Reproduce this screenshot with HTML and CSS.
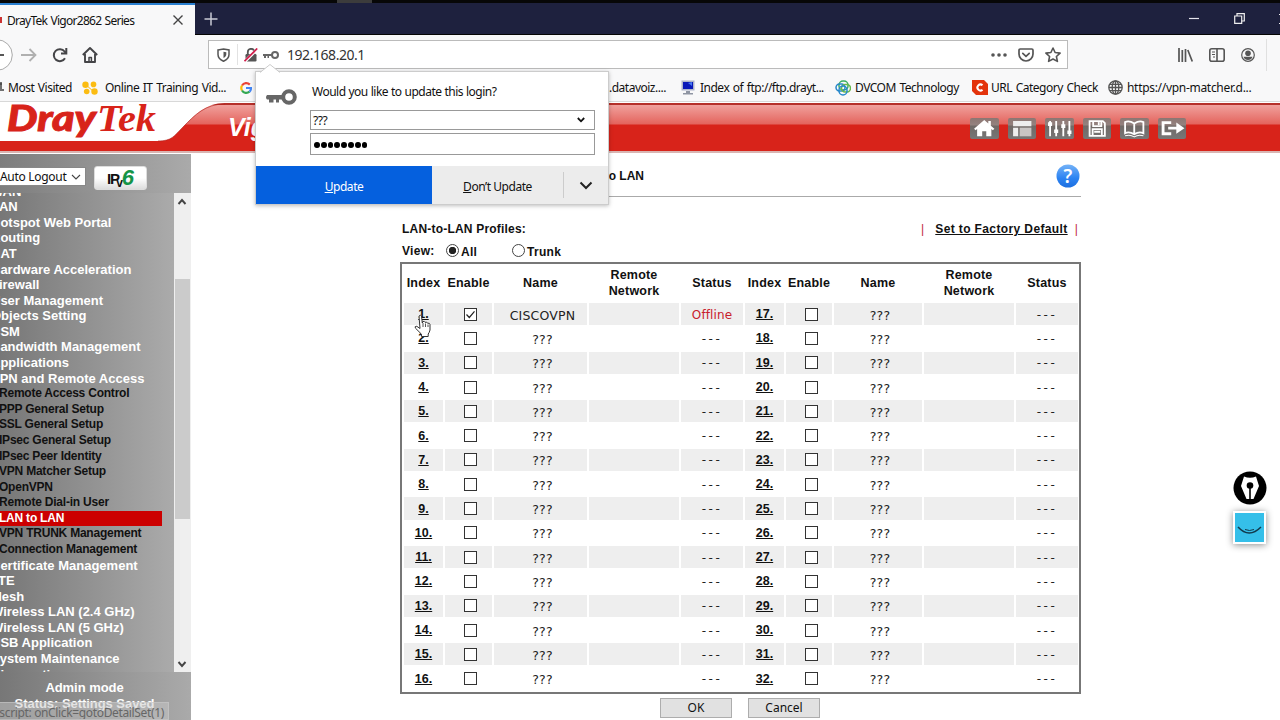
FILE: index.html
```html
<!DOCTYPE html>
<html lang="en">
<head>
<meta charset="UTF-8">
<meta name="viewport" content="width=device-width, initial-scale=1.0">
<title>DrayTek Vigor2862 Series</title>
<link rel="stylesheet" href="styles.css">
</head>
<body>
<div class="screen-edge"><span></span></div>
<div class="tabbar">
    <div class="tab">
        <i class="favicon"></i>
        <span class="tab-title">DrayTek Vigor2862 Series</span>
        <svg width="12" height="12" viewBox="0 0 12 12"><path d="M1.5 1.5l9 9M10.5 1.5l-9 9" stroke="#444" stroke-width="1.4"/></svg>
    </div>
    <svg class="new-tab" width="14" height="14" viewBox="0 0 14 14"><path d="M7 .5v13M.5 7h13" stroke="#c9cad5" stroke-width="1.5"/></svg>
    <div class="window-buttons">
        <svg width="10" height="12" viewBox="0 0 10 12"><path d="M0 5.5h10" stroke="#e4e4ec" stroke-width="1.2"/></svg>
        <svg width="11" height="11" viewBox="0 0 11 11" fill="none" stroke="#eee" stroke-width="1.2"><path d="M.7 3h7v7.3h-7zM3 3V.7h7.300V8H8"/></svg>
        <svg width="10" height="10" viewBox="0 0 10 10"><path d="M0 0l10 10M10 0L0 10" stroke="#eee"/></svg>
    </div>
</div>
<div class="toolbar">
    <div class="nav-icons">
        <svg width="14" height="32" viewBox="0 0 14 32" fill="none"><circle cx="-3" cy="16" r="15.3" fill="#fff" stroke="#aaa"/><path d="M-6 16H4" stroke="#444" stroke-width="1.8"/></svg>
        <svg class="forward" width="16" height="14" viewBox="0 0 16 14" fill="none" stroke="#b0b0b0" stroke-width="1.8"><path d="M0 7h14M8.500 1l6 6-6 6"/></svg>
        <svg class="reload" width="16" height="16" viewBox="0 0 16 16" fill="none" stroke="#454548" stroke-width="2"><path d="M13 11.200A6 6 0 1 1 12.600 4.500L14 6"/><path d="M14.300 1v5.600H9"/></svg>
        <svg class="home" width="16" height="16" viewBox="0 0 16 16" fill="none" stroke="#454548" stroke-width="1.9" stroke-linejoin="round"><path d="M.8 8L8 1l7.200 7M3 7v8h10V7"/><path d="M7 15v-4.500h2.400V15" stroke-width="1.5"/></svg>
    </div>
    <div class="urlbar">
        <svg width="13" height="14" viewBox="0 0 13 14" fill="none" stroke="#555" stroke-width="1.5"><path d="M1 2l5.500-1L12 2v4.500c0 3-2 5.200-5.500 6.700C3 11.700 1 9.500 1 6.500z"/><path d="M6.500 3.800v6.300c2-1.100 2.800-2.300 2.800-4.100V4.300z" fill="#555" stroke="none"/></svg>
        <i class="url-sep"></i>
        <svg class="lock" width="14" height="14" viewBox="0 0 14 14"><path d="M3.800 6V4a3.200 3.200 0 0 1 6.400 0v2" fill="none" stroke="#555" stroke-width="1.8"/><rect x="1.5" y="6" width="11" height="7.5" rx="1.2" fill="#555"/><path d="M0 14.500L13.500.8" stroke="#fff" stroke-width="3"/><path d="M.5 13.200L13.200.5" stroke="#d01c4a" stroke-width="1.7"/></svg>
        <svg class="small-key" width="16" height="8" viewBox="0 0 32 16"><path d="M0 6h18v4H12v4H9v-4H6v4H2v-4H0z" fill="#666"/><circle cx="24" cy="8" r="6" fill="none" stroke="#666" stroke-width="4"/></svg>
        <span class="address">192.168.20.1</span>
        <span class="url-actions">
            <svg width="16" height="16" viewBox="0 0 16 16" fill="#555"><circle cx="2" cy="8" r="1.8"/><circle cx="8" cy="8" r="1.8"/><circle cx="14" cy="8" r="1.8"/></svg>
            <svg width="16" height="14" viewBox="0 0 16 14" fill="none" stroke="#555" stroke-width="1.7" stroke-linecap="round"><path d="M2.200 1h11.600q1.200 0 1.200 1.200V6a7 7 0 0 1-14 0V2.200Q1 1 2.200 1z"/><path d="M4.800 5.300L8 8.300l3.200-3"/></svg>
            <svg width="16" height="16" viewBox="0 0 16 16" fill="none" stroke="#555" stroke-width="1.6" stroke-linejoin="round"><path d="M8 1l2.100 4.500 5 .6-3.700 3.400 1 4.900L8 12l-4.400 2.400 1-4.900L.9 6.100l5-.6z"/></svg>
        </span>
    </div>
    <div class="toolbar-right">
        <svg width="15" height="14" viewBox="0 0 15 14" stroke="#555" stroke-width="1.7"><path d="M1 0v14M4.300 2v12M7.500 1v13M9.800 2l4.500 11.500"/></svg>
        <svg width="16" height="14" viewBox="0 0 16 14" fill="none" stroke="#555" stroke-width="1.6"><rect x=".8" y=".8" width="14.4" height="12.4" rx="2"/><path d="M8 1v12"/><path d="M3 4h3M3 6.500h3M4 9h2" stroke-width="1"/></svg>
        <svg width="14" height="14" viewBox="0 0 14 14"><circle cx="7" cy="7" r="6.3" fill="none" stroke="#555" stroke-width="1.2"/><circle cx="7" cy="5.2" r="2.8" fill="#555"/><path d="M2.500 8.700h9A5 5 0 0 1 7 12a5 5 0 0 1-4.500-3.300z" fill="#555"/></svg>
        <i class="toolbar-sep"></i>
    </div>
</div>
<div class="bookmarks">
    <span class="bm most"><svg width="6" height="14" viewBox="0 0 6 14" stroke="#444" stroke-width="1.5" fill="none"><path d="M0 3h2M1 1v7M0 9h4"/></svg><b>Most Visited</b></span>
    <span class="bm online"><svg width="16" height="14" viewBox="0 0 16 14" fill="#fbbc12"><circle cx="3.5" cy="3.8" r="3.2"/><circle cx="11.5" cy="3.4" r="2.8"/><circle cx="4.7" cy="10.5" r="2.8"/><circle cx="12.5" cy="10.5" r="3.2"/><path d="M3 3l9 8" stroke="#fbbc12"/></svg><b>Online IT Training Vid...</b></span>
    <span class="bm"><svg width="12" height="12" viewBox="0 0 12 12" fill="none" stroke-width="2.2"><path d="M9.800 2.600A5 5 0 0 0 2 3.500" stroke="#ea4335"/><path d="M2 3.500a5 5 0 0 0 0 5" stroke="#fbbc05"/><path d="M2 8.500a5 5 0 0 0 7.500 1.200" stroke="#34a853"/><path d="M9.500 9.700A5 5 0 0 0 11 6H6" stroke="#4285f4"/></svg></span>
    <span class="bm dv"><b>.datavoiz....</b></span>
    <span class="bm ftp"><svg width="14" height="15" viewBox="0 0 14 15"><rect x=".5" y=".5" width="13" height="10" fill="#adb4c9"/><rect x="2" y="2" width="10" height="7" fill="#0818b9"/><path d="M7 3l4-1v4z" fill="#4778ef"/><path d="M5 11h4v2h3v1.500H2V13h3z" fill="#8f95a3"/></svg><b>Index of ftp://ftp.drayt...</b></span>
    <span class="bm dvcom"><svg width="16" height="16" viewBox="0 0 16 16" fill="none" stroke-width="1.5"><rect x="4" y="1" width="9" height="9" rx="4" stroke="#39ad63"/><rect x="1" y="4" width="9" height="7" rx="3.5" stroke="#2786c8"/><rect x="6.500" y="4.500" width="9" height="7.500" rx="3.700" stroke="#67b74d"/><rect x="4" y="6" width="8" height="9" rx="4" stroke="#2588cc"/></svg><b>DVCOM Technology</b></span>
    <span class="bm cat"><svg width="16" height="15" viewBox="0 0 16 15"><path d="M0 0h12l4 4v11H4l-4-4z" fill="#e3330c"/><path d="M10.500 5.300A3 3 0 1 0 10.500 9.700" fill="none" stroke="#fff" stroke-width="2"/></svg><b>URL Category Check</b></span>
    <span class="bm vpn"><svg width="15" height="15" viewBox="0 0 15 15" fill="none" stroke="#555" stroke-width="1.3"><circle cx="7.5" cy="7.5" r="6.7"/><ellipse cx="7.5" cy="7.5" rx="3.3" ry="6.7"/><path d="M7.500 1v13M1 7.500h13M2 4.300h11M2 10.700h11"/></svg><b>https://vpn-matcher.d...</b></span>
</div>
<div class="banner">
    <svg class="logo" width="270" height="50" viewBox="0 0 270 50">
        <path d="M0 0H225C205 0 195 12 183 24C174 33 172 38 158 38H0z" fill="#fff"/>
        <path d="M158 38C172 38 174 33 183 24C195 12 205 1 225 1" fill="none" stroke="#b0201a" stroke-width="1" opacity=".6"/>
        <text class="logo-dray" x="7" y="28" textLength="89" lengthAdjust="spacingAndGlyphs">Dray</text>
        <text class="logo-tek" x="97" y="28" textLength="59" lengthAdjust="spacingAndGlyphs">Tek</text>
        <text class="logo-vigor" x="228" y="33">Vigor</text>
    </svg>
    <div class="shortcuts">
        <i><svg viewBox="0 0 28 20"><path d="M14 2L4 10.500l1.500 1.500L7 10.800V18h5v-5h4v5h5v-7.200l1.500 1.200 1.500-1.500-3.500-3V3h-2.500v2.300z" fill="#fff"/></svg></i>
        <i><svg viewBox="0 0 28 20"><path d="M5 3h18v5H5zM5 9.500h5V18H5z" fill="#eee"/><path d="M11.500 9.500H23V18H11.500z" fill="#c9c5c4"/></svg></i>
        <i><svg viewBox="0 0 28 20" stroke="#fff" stroke-width="1.8"><path d="M5 3v15M11 3v15M18 3v15M24 3v15"/><path d="M3 6h4M9 13h4M16 8h4M22 14h4" stroke-width="3.500"/></svg></i>
        <i><svg viewBox="0 0 28 20" fill="none" stroke="#fff" stroke-width="1.8"><path d="M6.500 3h13l2 2v12.500h-15z"/><path d="M10 3v5h8V3M9.500 17v-6h9v6M11 13.500h6"/><path d="M15.500 4v3"/></svg></i>
        <i><svg viewBox="0 0 28 20" fill="none" stroke="#fff" stroke-width="1.8"><path d="M14 5.500Q9 2 5 4v11q4-2 9 1 5-3 9-1V4q-4-2-9 1.500zM14 5v11"/><path d="M5 17.500q5-1.500 9 1 4-2.500 9-1" stroke-width="1"/></svg></i>
        <i><svg viewBox="0 0 28 20"><path d="M13 4.500H5v11h8M10 10h10" fill="none" stroke="#fff" stroke-width="2.800"/><path d="M18 4.500L26 10l-8 5.500z" fill="#fff"/></svg></i>
    </div>
</div>
<div class="page">
    <div class="sidebar">
        <div class="sidebar-top">
            <div class="logout"><span>Auto Logout</span><svg width="10" height="6" viewBox="0 0 10 6"><path d="M1 1l4 4 4-4" fill="none" stroke="#444" stroke-width="1.1"/></svg></div>
            <div class="ipv6"><b>IP</b><small>v</small><em>6</em></div>
        </div>
        <div class="menu-wrap">
            <ul class="menu">
                <li>WAN</li>
                <li>LAN</li>
                <li>Hotspot Web Portal</li>
                <li>Routing</li>
                <li>NAT</li>
                <li>Hardware Acceleration</li>
                <li>Firewall</li>
                <li>User Management</li>
                <li>Objects Setting</li>
                <li>CSM</li>
                <li>Bandwidth Management</li>
                <li>Applications</li>
                <li>VPN and Remote Access</li>
                <li class="sub">Remote Access Control</li>
                <li class="sub">PPP General Setup</li>
                <li class="sub">SSL General Setup</li>
                <li class="sub">IPsec General Setup</li>
                <li class="sub">IPsec Peer Identity</li>
                <li class="sub">VPN Matcher Setup</li>
                <li class="sub">OpenVPN</li>
                <li class="sub">Remote Dial-in User</li>
                <li class="sub active">LAN to LAN</li>
                <li class="sub">VPN TRUNK Management</li>
                <li class="sub">Connection Management</li>
                <li>Certificate Management</li>
                <li>LTE</li>
                <li>Mesh</li>
                <li>Wireless LAN (2.4 GHz)</li>
                <li>Wireless LAN (5 GHz)</li>
                <li>USB Application</li>
                <li>System Maintenance</li>
                <li>Diagnostics</li>
            </ul>
            <div class="scrollbar">
                <svg width="16" height="17" viewBox="0 0 16 17"><path d="M4.500 11L8 7l3.500 4" fill="none" stroke="#444" stroke-width="1.9"/></svg>
                <i></i>
                <svg width="16" height="17" viewBox="0 0 16 17"><path d="M4.500 7L8 11l3.500-4" fill="none" stroke="#444" stroke-width="1.9"/></svg>
            </div>
        </div>
        <div class="mode">Admin mode<br>Status: Settings Saved</div>
    </div>
    <div class="content">
        <div class="title-row">
            <span class="page-title">VPN and Remote Access &gt;&gt; LAN to LAN</span>
            <svg width="24" height="24" viewBox="0 0 24 24">
                <defs><linearGradient id="help" x1="0" y1="0" x2="0" y2="1"><stop offset="0" stop-color="#74b2f7"/><stop offset=".6" stop-color="#2c83f2"/><stop offset="1" stop-color="#1d6fe0"/></linearGradient></defs>
                <circle cx="12" cy="12" r="11.5" fill="url(#help)"/>
                <text class="help-mark" x="12" y="19" text-anchor="middle">?</text>
            </svg>
        </div>
        <div class="profiles-row">
            <span>LAN-to-LAN Profiles:</span>
            <span class="factory"><i>|</i><u>Set to Factory Default</u><i>|</i></span>
        </div>
        <div class="view-row">
            <span class="view-label">View:</span>
            <i class="radio on"></i><span class="all">All</span>
            <i class="radio"></i><span class="trunk">Trunk</span>
        </div>
        <div class="profiles" id="profiles">
            <div class="th">Index</div><div class="th">Enable</div><div class="th">Name</div><div class="th">Remote<br>Network</div><div class="th">Status</div>
            <div class="th">Index</div><div class="th">Enable</div><div class="th">Name</div><div class="th">Remote<br>Network</div><div class="th">Status</div>
        </div>
        <div class="buttons"><span>OK</span><span>Cancel</span></div>
    </div>
</div>

<div class="login-popup">
    <svg class="popup-arrow" width="20" height="9" viewBox="0 0 20 9"><path d="M0 9L10 0l10 9z" fill="#fff"/><path d="M0 8.500L10 .5l10 8" fill="none" stroke="#ccc"/></svg>
    <div class="popup-body">
        <svg width="32" height="16" viewBox="0 0 32 16"><path d="M2 6h17v4.500h-5v3h-3v-3H8.500v3H4v-3H2q-2-2.200 0-4.500z" fill="#666"/><circle cx="24" cy="8" r="5.8" fill="none" stroke="#666" stroke-width="4"/></svg>
        <div class="popup-form">
            <p>Would you like to update this login?</p>
            <div class="field user"><span>???</span><svg width="8" height="6" viewBox="0 0 8 6"><path d="M.8 1L4 4.300 7.200 1" fill="none" stroke="#111" stroke-width="1.8"/></svg></div>
            <div class="field pass"><i></i><i></i><i></i><i></i><i></i><i></i><i></i><i></i></div>
        </div>
    </div>
    <div class="popup-buttons">
        <span class="update"><span><u>U</u>pdate</span></span>
        <span class="dont"><span><u>D</u>on’t Update</span></span>
        <span class="more"><svg width="14" height="9" viewBox="0 0 14 9"><path d="M1.500 1.500L7 7l5.500-5.500" fill="none" stroke="#222" stroke-width="2"/></svg></span>
    </div>
</div>
<svg class="cursor" width="18" height="24" viewBox="0 0 18 24"><path d="M5 2q1.500-1.500 2.500 0l.8 7 .5-1.500q1.800-.6 2.200.8 2-.8 2.500.9 2.200-.5 2.500 1.300v5.500q-.6 2.500-1.800 4V22.500H7.500v-2.300L1.300 14q-.8-2 1.500-1.700L6 14.500z" fill="#fff" stroke="#333"/><path d="M9 9v4M11.500 9.500V13M14 10.500V13" stroke="#555" fill="none"/></svg>
<div class="dock">
    <svg width="34" height="34" viewBox="0 0 34 34"><circle cx="17" cy="17" r="16.5" fill="#000"/><path d="M11 5.500q6 2.500 12 0L26 15l-5.500 13h-7L8 15z" fill="#fff"/><path d="M17 15v13" stroke="#000" stroke-width="1.6"/><circle cx="17" cy="14.500" r="3.300" fill="#000"/></svg>
    <svg class="smile" width="33" height="33" viewBox="0 0 33 33"><rect x="1" y="1" width="31" height="31" fill="#35bfe9" stroke="#fff" stroke-width="2"/><path d="M5 16q11 12 23 0" fill="none" stroke="#123a4c" stroke-width="1.500"/><path d="M12 18.500q4.500 2 9 0" fill="none" stroke="#123a4c"/></svg>
</div>
<div class="status-tip"><span>ascript: onClick=gotoDetailSet(1)</span></div>

<script>
const grid = document.getElementById('profiles');

function cells(index, odd) {
    const first = index === 1;
    const shade = odd ? ' odd' : '';
    const check = first ? '<svg viewBox="0 0 11 11"><path d="M1.500 5.500l2.800 3 5.200-6.200" fill="none" stroke="#222" stroke-width="1.200"/></svg>' : '';
    return `
        <div class="td index${shade}"><u>${index}.</u></div>
        <div class="td enable${shade}"><i class="checkbox">${check}</i></div>
        <div class="td name${shade}">${first ? 'CISCOVPN' : '???'}</div>
        <div class="td${shade}"></div>
        <div class="td status${shade}${first ? ' offline' : ''}">${first ? 'Offline' : '---'}</div>
    `;
}

let rows = '';
for (let i = 1; i <= 16; i++) {
    rows += cells(i, i % 2) + cells(i + 16, i % 2);
}
grid.insertAdjacentHTML('beforeend', rows);
</script>
</body>
</html>
```
FILE: styles.css
```css
* {
    box-sizing: border-box;
}
body {
    margin: 0;
    width: 1280px;
    height: 720px;
    display: flex;
    flex-direction: column;
    overflow: hidden;
    position: relative;
    background: #fff;
    color: #111;
    font-family: "Liberation Sans", Arial, sans-serif;
}
svg {
    display: block;
    flex-shrink: 0;
}
/* Browser chrome */
.screen-edge {
    height: 3px;
    background: #070707;
    flex-shrink: 0;
}
.screen-edge span {
    display: block;
    width: 35px;
    height: 3px;
    margin-left: 337px;
    background: #3c3c3c;
}
.tabbar {
    display: flex;
    align-items: center;
    height: 32px;
    flex-shrink: 0;
    background: #1e213e;
    border-bottom: 1px solid #050505;
}
.tab {
    display: flex;
    align-items: center;
    width: 195px;
    height: 32px;
    margin-bottom: -1px;
    background: #f8f8f9;
    border-top: 2px solid #2a7fd0;
    font: 12px "Noto Sans", sans-serif;
}
.favicon {
    width: 2px;
    height: 6px;
    background: #c33;
    margin-right: 5px;
}
.tab-title {
    width: 165px;
    white-space: nowrap;
    letter-spacing: -0.72px;
    word-spacing: 0.8px;
}
.new-tab {
    margin-left: 9px;
}
.window-buttons {
    display: flex;
    align-items: center;
    gap: 34.5px;
    margin-left: auto;
    margin-right: -9px;
}
.toolbar {
    display: flex;
    align-items: center;
    height: 39px;
    flex-shrink: 0;
    background: #f8f8f9;
}
.nav-icons {
    display: flex;
    align-items: center;
    width: 208px;
}
.forward {
    margin-left: 7px;
}
.reload {
    margin-left: 15px;
}
.home {
    margin-left: 14px;
}
.urlbar {
    display: flex;
    align-items: center;
    width: 860px;
    height: 29px;
    padding: 0 6px 0 8px;
    border: 1px solid #bbb;
    background: #fff;
}
.url-sep {
    width: 1px;
    height: 21px;
    margin: 0 6px 0 7px;
    background: #e2e2e2;
}
.small-key {
    margin-left: 5px;
}
.address {
    margin-left: 8px;
    font: 14px "Noto Sans", sans-serif;
    letter-spacing: -0.45px;
    color: #333;
}
.url-actions {
    display: flex;
    align-items: center;
    gap: 11px;
    margin-left: auto;
}
.toolbar-right {
    display: flex;
    align-items: center;
    gap: 16px;
    margin-left: 110px;
}
.toolbar-sep {
    width: 1px;
    height: 32px;
    background: #e0e0e0;
    margin-left: -5px;
}
.bookmarks {
    display: flex;
    align-items: center;
    height: 28px;
    flex-shrink: 0;
    background: #f8f8f9;
    border-bottom: 1px solid #d8d8d8;
    font: 12px "Noto Sans", sans-serif;
}
.bm {
    display: flex;
    align-items: center;
    white-space: nowrap;
}
.bm b {
    font-weight: normal;
    letter-spacing: -0.5px;
    word-spacing: 1px;
}
.most {
    width: 82px;
    gap: 2px;
}
.online {
    width: 158px;
    gap: 7px;
}
.dv {
    width: 72px;
    margin-left: 357px;
}
.ftp {
    width: 154px;
    gap: 5px;
}
.dvcom {
    width: 137px;
    gap: 4px;
}
.cat {
    width: 136px;
    gap: 3px;
}
.vpn {
    gap: 4px;
}
.bm.vpn b {
    letter-spacing: -0.3px;
}
/* Router header */
.banner {
    display: flex;
    align-items: flex-start;
    height: 50px;
    flex-shrink: 0;
    border-top: 2px solid #b5302a;
    border-bottom: 2px solid #d9b5b2;
    background: linear-gradient(#f0a19d 0, #e4645d 19px, #d8231a 20px);
    margin-top: 1px;
}
.logo {
    margin-top: -2px;
}
.logo-dray {
    font: italic 900 36px Lato, sans-serif;
    fill: #d8231a;
    stroke: #d8231a;
    stroke-width: 0.9px;
}
.logo-tek {
    font: italic bold 37px "Liberation Serif", serif;
    fill: #d8231a;
}
.logo-vigor {
    font: italic bold 25px "Liberation Sans", sans-serif;
    fill: #fff;
}
.shortcuts {
    display: flex;
    gap: 9px;
    margin: 13px 0 0 700px;
}
.shortcuts i {
    width: 28.5px;
    height: 21px;
    border-radius: 2px;
    background: linear-gradient(#8d7672 0, #94827f 7px, #706966 8px, #777);
}
.page {
    display: flex;
    flex: 1;
    min-height: 0;
}
/* Sidebar */
.sidebar {
    display: flex;
    flex-direction: column;
    width: 191px;
    margin-top: 1px;
    background: linear-gradient(90deg, #777, #999 60%, #b0b0b0);
    overflow: hidden;
}
.sidebar-top {
    display: flex;
    height: 39px;
    flex-shrink: 0;
    background: linear-gradient(90deg, #7d7d7d, #aaa);
}
.logout {
    display: flex;
    align-items: center;
    justify-content: space-between;
    width: 86px;
    height: 19px;
    margin-top: 13px;
    padding-right: 4px;
    border: 1px solid #888;
    border-left: 0;
    background: #fff;
    font: 12px "Noto Sans", sans-serif;
    white-space: nowrap;
    letter-spacing: -0.3px;
}
.ipv6 {
    display: flex;
    align-items: center;
    justify-content: center;
    width: 53px;
    height: 24px;
    margin: 12px 0 0 8px;
    border: 1px solid #ddd;
    border-radius: 3px;
    background: linear-gradient(#fff 50%, #ddd);
    font-size: 15px;
}
.ipv6 b {
    letter-spacing: -1px;
}
.ipv6 small {
    margin: 9px -1px 0 -3px;
    font-size: 12px;
    font-weight: bold;
}
.ipv6 em {
    color: #149447;
    font: italic bold 22px "Liberation Sans", sans-serif;
}
.menu-wrap {
    display: flex;
    height: 479px;
    flex-shrink: 0;
    overflow: hidden;
}
.menu {
    list-style: none;
    width: 174px;
    margin: -9.3px 0 0;
    padding: 0;
    flex-shrink: 0;
}
.menu li {
    height: 15.58px;
    text-indent: -9px;
    line-height: 15.58px;
    color: #fff;
    font-size: 13px;
    font-weight: bold;
    white-space: nowrap;
    letter-spacing: 0;
}
.menu .sub {
    width: 162px;
    text-indent: -1px;
    color: #111;
    font-size: 12px;
    letter-spacing: -0.22px;
}
.menu .active {
    background: #c00;
    color: #fff;
}
.scrollbar {
    display: flex;
    flex-direction: column;
    justify-content: space-between;
    width: 17px;
    background: #efefef;
}
.scrollbar i {
    height: 240px;
    margin: 69px 1px auto;
    background: #cbcbcb;
}
.mode {
    flex: 1;
    padding: 8px 22px 0 0;
    background: linear-gradient(90deg, #777, #aaa);
    color: #fff;
    text-align: center;
    font-size: 13px;
    font-weight: bold;
    line-height: 16px;
    letter-spacing: -0.05px;
}
/* Main area */
.content {
    width: 681px;
    margin-left: 209px;
}
.title-row {
    display: flex;
    align-items: center;
    justify-content: space-between;
    height: 44px;
    padding: 2px 1px 0 0;
    border-bottom: 1px solid #aaa;
    font-size: 12px;
    font-weight: bold;
}
.page-title {
    width: 244px;
    text-align: right;
    white-space: nowrap;
}
.help-mark {
    font: 600 19px "Noto Sans", sans-serif;
    fill: #fff;
}
.profiles-row {
    display: flex;
    align-items: center;
    justify-content: space-between;
    height: 20px;
    margin-top: 22px;
    padding: 0 3px 0 2px;
    font-size: 12px;
    font-weight: bold;
    letter-spacing: 0.2px;
}
.factory i {
    color: #c22840;
    font-style: normal;
    font-weight: normal;
}
.factory u {
    margin: 0 7px 0 11px;
    letter-spacing: 0.38px;
}
.view-row {
    display: flex;
    align-items: center;
    height: 23px;
    padding-left: 2px;
    font-size: 12px;
    font-weight: bold;
    letter-spacing: 0.3px;
}
.view-label {
    width: 44px;
    white-space: nowrap;
}
.radio {
    width: 13px;
    height: 13px;
    margin-right: 2px;
    border: 1px solid #444;
    border-radius: 50%;
    background: #fff;
}
.radio.on {
    background: radial-gradient(circle, #222 3.4px, #fff 4px);
}
.all {
    width: 51px;
}
.all, .trunk {
    padding-top: 2px;
}
.profiles {
    display: grid;
    grid-template-columns: 39px 47px 93px 90px 62px 39px 46px 88px 90px 62px;
    grid-template-rows: 37px;
    grid-auto-rows: 22.31px;
    gap: 2px;
    height: 432px;
    padding: 0 0 0 2px;
    border: 2px solid #777;
}
.th {
    display: flex;
    align-items: center;
    justify-content: center;
    padding-top: 2px;
    text-align: center;
    font-size: 12.5px;
    font-weight: bold;
    line-height: 15.5px;
    letter-spacing: 0.2px;
}
.td {
    display: flex;
    align-items: center;
    justify-content: center;
    font: 12px "DejaVu Sans", Verdana, sans-serif;
    color: #222;
}
.odd {
    background: #eee;
}
.index {
    font: bold 12.5px "Liberation Sans", Arial, sans-serif;
    color: #111;
}
.enable {
    padding-left: 4px;
}
.checkbox {
    width: 13px;
    height: 13px;
    border: 1px solid #333;
    background: #fff;
}
.name {
    padding: 2px 0 0 4px;
    font-size: 12.5px;
    letter-spacing: 0.2px;
}
.status {
    padding-top: 1px;
    letter-spacing: 2.5px;
}
.offline {
    color: #c8202c;
    letter-spacing: 0.1px;
}
.buttons {
    display: flex;
    gap: 16px;
    margin: 4px 0 0 260px;
}
.buttons span {
    width: 72px;
    height: 20px;
    border: 1px solid #adadad;
    background: #e1e1e1;
    font: 12px/18px "Noto Sans", sans-serif;
    text-align: center;
}
/* Password doorhanger */
.login-popup {
    position: absolute;
    left: 255px;
    top: 71px;
    width: 354px;
    height: 134px;
    border: 1px solid #ccc;
    background: #fff;
    box-shadow: 0 1px 4px rgba(0, 0, 0, 0.25);
    font: 12px "Noto Sans", sans-serif;
}
.popup-arrow {
    position: absolute;
    left: 4px;
    top: -8px;
}
.popup-body {
    display: flex;
    height: 94px;
    padding: 17px 13px 0 9px;
    gap: 13px;
}
.popup-form {
    width: 285px;
    margin-top: -6px;
}
.popup-form p {
    margin: 0 0 10px 2px;
    line-height: 17px;
    letter-spacing: -0.5px;
    word-spacing: 0.3px;
}
.field {
    display: flex;
    align-items: center;
    border: 1px solid #999;
}
.user {
    height: 20px;
    justify-content: space-between;
    padding: 0 9px 0 2px;
    letter-spacing: -0.4px;
}
.pass {
    height: 22px;
    margin-top: 3px;
    padding: 2px 0 0 3px;
    gap: 1px;
}
.pass i {
    width: 5.8px;
    height: 5.8px;
    border-radius: 50%;
    background: #000;
}
.popup-buttons {
    display: flex;
    height: 38px;
    background: #ececec;
    letter-spacing: -0.45px;
}
.popup-buttons > span {
    display: flex;
    align-items: center;
    justify-content: center;
}
.popup-buttons > span > span {
    padding-top: 2px;
}
.popup-buttons .update {
    width: 176px;
    background: #0560de;
    color: #fff;
}
.dont {
    width: 131px;
}
.more {
    flex: 1;
    height: 26px;
    margin-top: 6px;
    border-left: 1px solid #ccc;
}
.cursor {
    position: absolute;
    left: 414px;
    top: 314px;
}
.dock {
    position: absolute;
    left: 1233px;
    top: 471px;
    display: flex;
    flex-direction: column;
    gap: 6px;
}
.smile {
    box-shadow: 0 1px 7px rgba(0, 0, 0, 0.45);
}
.status-tip {
    position: absolute;
    left: 0;
    top: 702px;
    display: flex;
    justify-content: flex-end;
    width: 169px;
    height: 18px;
    padding-right: 4px;
    overflow: hidden;
    background: rgba(200, 200, 200, 0.5);
    border: 1px solid rgba(200, 200, 200, 0.6);
    border-left: 0;
    color: #666;
    font: 12px/19px "Noto Sans", sans-serif;
    letter-spacing: -0.35px;
    white-space: nowrap;
}
```
